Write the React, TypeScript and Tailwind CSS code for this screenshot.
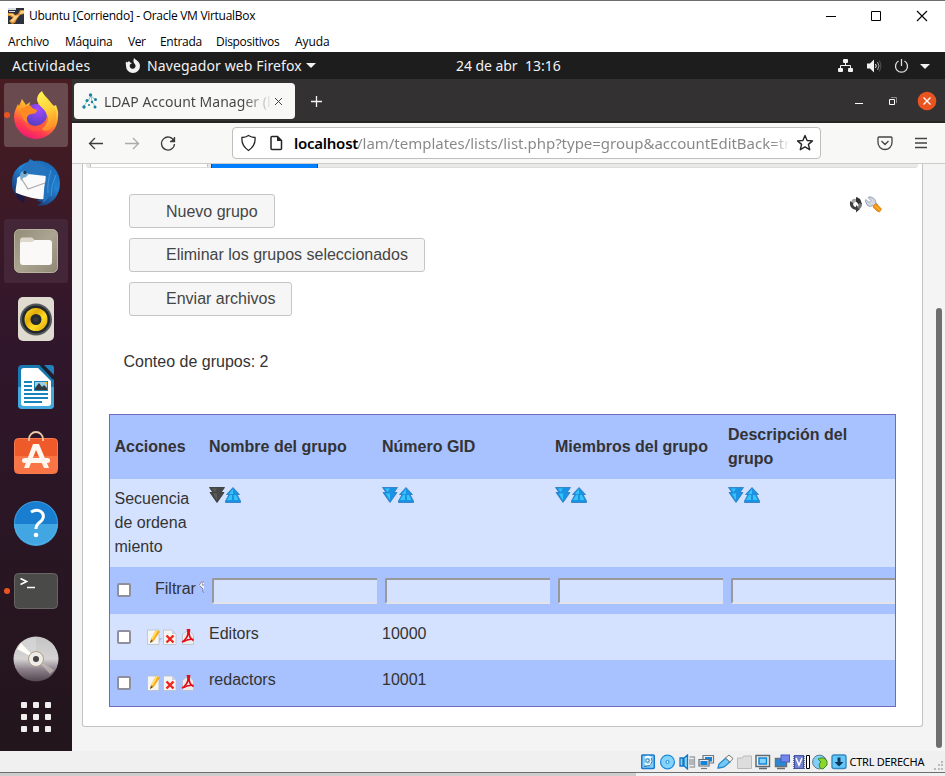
import type { ReactNode } from "react";

const UI = "font-['Open_Sans','Noto_Sans',sans-serif]";
const UBUNTU = "font-['Noto_Sans','Open_Sans',sans-serif]";

function TitleBar() {
  return (
    <header className={`h-[52px] shrink-0 border-t border-[#6e6e6e] bg-white text-[12px] text-black ${UI}`}>
      <div className="flex h-[29px] items-center pl-2">
        <svg width="16" height="16" viewBox="0 0 16 16" className="mr-[5px] shrink-0">
          <rect width="16" height="16" fill="#2c313d" />
          <path d="M0 0h8v2H0zM1 3h6v1H1z" fill="#d9dce2" />
          <path d="M0 5h5l2 2 3-1 2-4h4v4l-4 1-3 4-2 4-3 1-3-3 4-3-3-2H0z" fill="#dc8b28" />
          <path d="M1 6h4l2 2 4-1 2-4h3v2l-4 1-4 5-3 3-3-1 4-4-3-2H1z" fill="#ffd28b" />
        </svg>
        <span className="w-[227px] whitespace-nowrap tracking-[-0.29px]">Ubuntu [Corriendo] - Oracle VM VirtualBox</span>
        <div className="flex-1" />
        <svg width="106" height="12" viewBox="0 0 106 12" fill="none" stroke="#000" className="mr-[13px]">
          <path d="M0 6.5h10" />
          <path d="M45.5 1.5h9v9h-9z" />
          <path d="M91 1l10 10M101 1L91 11" strokeWidth="1.1" />
        </svg>
      </div>
      <nav className="flex h-[22px] items-center pl-2 pt-[2px] leading-[20px]">
        <span className="w-[57px] tracking-[-0.1px]">Archivo</span>
        <span className="w-[63px] tracking-[-0.25px]">Máquina</span>
        <span className="w-8 tracking-[-0.4px]">Ver</span>
        <span className="w-14 tracking-[-0.3px]">Entrada</span>
        <span className="w-[79px] tracking-[-0.3px]">Dispositivos</span>
        <span className="tracking-[-0.1px]">Ayuda</span>
      </nav>
    </header>
  );
}

function TopBar() {
  return (
    <div className={`flex h-[27px] shrink-0 items-center bg-[#1d1d1d] text-[14px] text-[#f2f2f2] ${UBUNTU}`}>
      <span className="ml-3 w-[112px] tracking-[0.35px]">Actividades</span>
      <svg width="18" height="16" viewBox="0 0 18 16" className="mr-[5px]">
        <path d="M2 3.5l1.2 1L5 3l1 1.5L8 5 6 6.5c-1 3 1.3 4.5 3 4.2 2.5-.4 3.3-3 1.8-4.8-1.2-1.2-2-2.5-.8-5.9 1 1.3 2 2 3 2.5 2 1.5 3 3.5 3 5.500a7 7 0 0 1-14 0c0-2-.5-2.500 0-4.500z" fill="#f2f2f2" />
      </svg>
      <span className="w-[155px] whitespace-nowrap tracking-[0.12px]">Navegador web Firefox</span>
      <svg width="10" height="5" className="ml-1"><path d="M0 0h10L5 5z" fill="#f2f2f2" /></svg>
      <span className="ml-[140px] w-[62px] whitespace-nowrap tracking-[-0.05px]">24 de abr</span>
      <span className="ml-[7px]">13:16</span>
      <div className="flex-1" />
      <svg width="92" height="14" viewBox="0 0 92 14" fill="#f2f2f2" className="mr-[15px]">
        <rect x="5" y="0" width="5" height="4" rx="1" />
        <rect x="0" y="9" width="5" height="4" rx="1" />
        <rect x="10" y="9" width="5" height="4" rx="1" />
        <path d="M7.500 4v3M2.500 9V6.500h10V9" fill="none" stroke="#f2f2f2" />
        <path d="M29 4.500h3l4-4v13l-4-4h-3z" />
        <path d="M37.500 5q1.500 2 0 4" fill="none" stroke="#f2f2f2" />
        <path d="M39.500 3q3 4 0 8" fill="none" stroke="#aaa" />
        <path d="M41.500 1.500q3 5.500 0 11" fill="none" stroke="#555" />
        <path d="M60.500 2a6 6 0 1 0 6 0M63.500 0v7" fill="none" stroke="#ddd" strokeWidth="1.300" />
        <path d="M82 5h10l-5 5z" />
      </svg>
    </div>
  );
}

function FirefoxIcon() {
  return (
    <svg width="46" height="48" viewBox="0 0 46 48">
      <defs>
        <linearGradient id="fx" x1=".8" y1="0" x2=".3" y2="1"><stop stopColor="#fff04a" /><stop offset=".45" stopColor="#ff9c27" /><stop offset=".75" stopColor="#ff3d4e" /><stop offset="1" stopColor="#f01679" /></linearGradient>
        <radialGradient id="fp" cx=".6" cy=".25" r=".8"><stop stopColor="#a34aff" /><stop offset="1" stopColor="#533dbd" /></radialGradient>
        <linearGradient id="fy" x1=".3" y1="0" x2=".6" y2="1"><stop stopColor="#fff44f" /><stop offset=".5" stopColor="#ffd03a" /><stop offset="1" stopColor="#ff8a26" /></linearGradient>
      </defs>
      <path d="M9 8l4 6 4-3-1 5 8-2 6-4 6 0 5 5 2-1 1 3c1 3 1.500 5 1 9A22 22 0 0 1 1 26c0-5 2-9 4-13l1 2z" fill="url(#fx)" />
      <circle cx="23" cy="24" r="11" fill="url(#fp)" />
      <path d="M24 9c0-4 2-7 5-9 2 5 6 7 9 12l3 6 1-1c3 9 0 18-6 22-3 1-6 1-7-1 5-5 7-12 3-18-3-4-7-6-8-11z" fill="url(#fy)" />
      <path d="M7 19c1-2 3-2 4-2 1-2 4-3 7-2 1 3 4 3 6 4 0 3-3 4-6 4-4 1-6 5-2 10-5-2-8-8-9-14z" fill="#ff8a22" />
      <path d="M11 30c7 9 21 5 24-6 1 11-7 17-15 16-4-1-8-5-9-10z" fill="#ff553f" opacity=".75" />
    </svg>
  );
}

function ThunderbirdIcon() {
  return (
    <svg width="50" height="50" viewBox="0 0 50 50">
      <defs><linearGradient id="tb" x1="1" y1="0" x2=".4" y2="1"><stop stopColor="#155ca8" /><stop offset=".5" stopColor="#2184d6" /><stop offset="1" stopColor="#182f69" /></linearGradient></defs>
      <path d="M19 1l4 2c14-2 26 8 26 22 0 12-7 19-14 22l-9 1 5-4-5-1 3-3-18-3 2 5C5 39 0 33 1 24 1 13 9 6 17 4z" fill="url(#tb)" />
      <path d="M10 12q3-6 10-8 10-1 16 7l-2 8-21 1z" fill="#2774be" />
      <path d="M6 20l3-2 8-2 18 2v4l-1 19C24 42 11 37 5 35c-1-4 1-8 1-15z" fill="#fafafa" />
      <path d="M10 20l7 11 17-6" fill="none" stroke="#aaa" strokeWidth="1.200" />
      <path d="M34 15c2 6-1 11-1 18l-1 12c5-2 6-9 10-10 2-12 3-21-6-26z" fill="#2272be" />
      <path d="M40 12q-4 13-3 23M45 17q-5 10-5 21" stroke="#3d9be2" fill="none" />
      <path d="M9 18q0-5 5-5l4 3q-2 3-6 4l-2 3z" fill="#7aaed0" /><circle cx="14" cy="14.500" r="1.700" fill="#173955" />
      <path d="M5 35l9 4-1 6c-4-2-8-5-8-10z" fill="#1d1945" />
    </svg>
  );
}

function FilesIcon() {
  return (
    <svg width="46" height="46" viewBox="0 0 46 46">
      <defs><linearGradient id="fl" x2="1" y2="1"><stop stopColor="#928c78" /><stop offset=".5" stopColor="#aaa491" /><stop offset="1" stopColor="#8e8875" /></linearGradient></defs>
      <rect x="1.500" y="1.500" width="43" height="43" rx="5" fill="url(#fl)" stroke="#b8b29f" />
      <path d="M7 12.500q0-3 3-3h9l3 3v5H7z" fill="#ddd8cb" />
      <path d="M7 16q0-2 2-2h10l3-2h14q3 0 3 3v19q0 3-3 3H10q-3 0-3-3z" fill="#faf9f7" />
    </svg>
  );
}

function RhythmboxIcon() {
  return (
    <svg width="38" height="46" viewBox="0 0 38 46">
      <defs><linearGradient id="rb" x2="1" y2="1"><stop stopColor="#ffe52e" /><stop offset=".35" stopColor="#e3aa07" /><stop offset=".6" stopColor="#ffdc25" /><stop offset="1" stopColor="#d7a106" /></linearGradient></defs>
      <rect x="1" y="1" width="36" height="44" rx="5" fill="#dfdbd0" />
      <circle cx="19" cy="23.500" r="16" fill="#55585a" /><circle cx="19" cy="23.500" r="14" fill="#20282d" />
      <circle cx="19" cy="23.500" r="11.500" fill="url(#rb)" /><circle cx="19" cy="23.500" r="5.500" fill="#222a30" /><circle cx="19" cy="23.500" r="2.500" fill="#35373a" />
    </svg>
  );
}

function WriterIcon() {
  return (
    <svg width="38" height="46" viewBox="0 0 38 46">
      <path d="M5 1h19l13 13v27q0 4-4 4H5q-4 0-4-4V5q0-4 4-4z" fill="#1979b1" />
      <path d="M1 23h36v18q0 4-4 4H5q-4 0-4-4z" fill="#43a9dd" />
      <path d="M27 1h7q3 0 3 3v7z" fill="#2382bc" /><path d="M23 0l14 15" stroke="#14252f" strokeWidth="2.500" />
      <path d="M4 7q0-3 3-3h14l13 13v22q0 3-3 3H7q-3 0-3-3z" fill="#fff" />
      <path d="M7 17h8v2H7zM7 21h8v2H7zM7 25h8v2H7zM7 29h24v2H7zM7 33h24v2H7zM7 37h18v2H7zM17 17h14v10H17z" fill="#1685bb" />
      <path d="M18 18h12v8H18z" fill="#9dcdec" /><path d="M18 26v-2l4-5 3 4 2-2 3 3v2z" fill="#333b3d" /><path d="M27 18h3v3z" fill="#efc12a" />
    </svg>
  );
}

function SoftwareIcon() {
  return (
    <svg width="46" height="46" viewBox="0 0 46 46" className="mb-[5px]">
      <rect x="1.500" y="8.500" width="43" height="35" rx="4" fill="#ee5a29" stroke="#f57c51" />
      <path d="M2 26h42v14q0 3-3 3H5q-3 0-3-3z" fill="#fa7445" />
      <path d="M16 11V9a7 7 0 0 1 14 0v2" fill="none" stroke="#edcba9" strokeWidth="1.800" />
      <path d="M20 14h6l10 24h-5l-8-18-7 18h-5z" fill="#fff6ef" />
      <rect x="9" y="28" width="28" height="5" rx="2.500" fill="#fff6ef" />
    </svg>
  );
}

function HelpIcon() {
  return (
    <svg width="46" height="46" viewBox="0 0 46 46">
      <circle cx="23" cy="23" r="22" fill="#197ed0" /><path d="M1 24h44a22 22 0 0 1-44 0z" fill="#42a6e3" />
      <circle cx="23" cy="23" r="21.500" fill="none" stroke="#63bce9" opacity=".5" />
      <path d="M18 12q5-3 9-1c5 3 4 8 0 11q-4 3-4 7" fill="none" stroke="white" strokeWidth="3" /><circle cx="23" cy="35" r="2.300" fill="white" />
    </svg>
  );
}

function TerminalIcon() {
  return (
    <svg width="46" height="38" viewBox="0 0 46 38">
      <rect x="1.500" y="1.500" width="43" height="35" rx="4" fill="#4a4a49" stroke="#686665" />
      <path d="M7.500 6.500l6 3-6 3" fill="none" stroke="white" strokeWidth="1.700" /><path d="M14 15.500h8" stroke="white" strokeWidth="1.500" />
    </svg>
  );
}

function DiscIcon() {
  return (
    <svg width="46" height="46" viewBox="0 0 46 46">
      <defs><linearGradient id="disc" x2="0" y2="1"><stop stopColor="#c5c5c5" /><stop offset=".5" stopColor="#d5d3d4" /><stop offset=".72" stopColor="#8f848e" /><stop offset="1" stopColor="#514550" /></linearGradient></defs>
      <circle cx="23" cy="23" r="22.500" fill="url(#disc)" />
      <path d="M23 23L23 1q-10 1-15 6z" fill="#ddd" opacity=".5" /><path d="M23 23L4 13l4-6z" fill="#fffdf6" /><path d="M23 23l18 11-4 4z" fill="#d1c5be" opacity=".6" />
      <circle cx="23" cy="23" r="7.500" fill="#eeece8" stroke="#aa9e83" /><circle cx="23" cy="23" r="3" fill="#474443" />
    </svg>
  );
}

function DockItem({ children, tone = "", dot = false }: { children: ReactNode; tone?: string; dot?: boolean }) {
  return (
    <div className={`relative mx-1 mb-1 flex h-16 w-16 shrink-0 items-center justify-center rounded-[3px] ${tone}`}>
      {dot && <i className="absolute left-0 top-[29px] size-[6px] rounded-full bg-[#e95420]" />}
      {children}
    </div>
  );
}

function Dock() {
  return (
    <aside className="flex w-[72px] shrink-0 flex-col bg-linear-to-b from-[#481c20] via-[#30162b] via-40% to-[#22151b] pt-1">
      <DockItem dot tone="bg-[#684a4f]"><FirefoxIcon /></DockItem>
      <DockItem><ThunderbirdIcon /></DockItem>
      <DockItem tone="bg-[#432739]"><FilesIcon /></DockItem>
      <DockItem><RhythmboxIcon /></DockItem>
      <DockItem><WriterIcon /></DockItem>
      <DockItem><SoftwareIcon /></DockItem>
      <DockItem><HelpIcon /></DockItem>
      <DockItem dot><TerminalIcon /></DockItem>
      <DockItem><DiscIcon /></DockItem>
      <div className="ml-[21px] mt-[7px] grid grid-cols-3 gap-[6px] self-start">
        {Array.from({ length: 9 }, (_, i) => <i key={i} className="size-[6px] rounded-[1px] bg-[#f1efed]" />)}
      </div>
    </aside>
  );
}

function TabBar() {
  return (
    <div className="flex h-11 shrink-0 items-start border-b-2 border-[#262526] bg-[#333132] pt-1">
      <div className={`ml-[2px] flex h-9 w-[221px] items-center rounded-[4px] bg-[#f8f8f7] text-[14px] ${UBUNTU}`}>
        <svg width="16" height="17" viewBox="0 0 16 17" className="ml-2 shrink-0">
          <path d="M9 2.500L6 8M9 2.500l5 5.500M5.500 8L1 14M9 3l1 6 4 5" stroke="#8fc3cb" fill="none" />
          <g fill="#16849c"><circle cx="8.500" cy="2" r="1.700" /><circle cx="5" cy="7.500" r="1.500" /><circle cx="13.500" cy="6.500" r="1.500" /><circle cx="10" cy="9" r="1.200" /><circle cx="2" cy="14" r="1.700" /><circle cx="7" cy="12" r="1" /><circle cx="13" cy="14" r="1.500" /></g>
        </svg>
        <span className="ml-[6px] w-[169px] whitespace-nowrap bg-linear-to-r from-[#444] from-82% to-transparent bg-clip-text tracking-[0.03px] text-transparent">LDAP Account Manager (l</span>
        <svg width="9" height="9" viewBox="0 0 9 9" className="ml-[1px] shrink-0"><path d="M1 1l7 7M8 1L1 8" stroke="#444" /></svg>
      </div>
      <svg width="12" height="12" className="ml-[16px] mt-[13px]"><path d="M5.500 0v11M0 5.500h11" stroke="#f4f4f4" strokeWidth="1.300" /></svg>
      <div className="flex-1" />
      <svg width="82" height="20" viewBox="0 0 82 20" className="mr-2 mt-2">
        <path d="M0 12.500h8" stroke="white" /><path d="M34.500 8.500h5v5h-5z" fill="none" stroke="white" /><path d="M36 6.500h5.500V12" fill="none" stroke="#888" />
        <circle cx="72" cy="10" r="9.300" fill="#e95420" /><path d="M68.500 6.500l7 7M75.500 6.500l-7 7" stroke="white" strokeWidth="1.400" />
      </svg>
    </div>
  );
}

function Toolbar() {
  return (
    <div className="flex h-[41px] shrink-0 items-center border-b border-[#ccc] bg-[#f8f8f7]">
      <svg width="90" height="18" viewBox="0 0 90 18" fill="none" stroke="#3c3c3c" strokeWidth="1.300" className="ml-4 shrink-0">
        <path d="M15 9.500H1.500M7 4L1.500 9.500 7 15" /><path d="M37 9.500h13.500M45 4l5.500 5.500L45 15" stroke="#aaa" />
        <path d="M86 7a6.500 6.500 0 1 0 .5 3M86.500 3v4.500H82" /><path d="M87 3v5h-5z" fill="#3c3c3c" stroke="none" />
      </svg>
      <div className={`ml-[54px] flex h-8 w-[589px] shrink-0 items-center rounded-[4px] border border-[#bebebe] bg-white text-[15px] ${UBUNTU}`}>
        <svg width="44" height="18" viewBox="0 0 44 18" fill="none" stroke="#242424" strokeWidth="1.500" className="ml-2 shrink-0">
          <path d="M7 1q3 2 6.500 2 1 8-6.500 13Q-.5 11 .5 3 4 3 7 1z" strokeWidth="1.300" transform="translate(.5 .5)" />
          <path d="M31 2.500h5.500l4 4v8q0 1-1 1H31q-1 0-1-1v-11q0-1 1-1z" /><path d="M36 2v5h5z" fill="#242424" stroke="none" />
        </svg>
        <div className="ml-[9px] flex w-[499px] whitespace-nowrap">
          <b className="w-[63px] shrink-0 font-semibold tracking-[-0.25px] text-black">localhost</b>
          <span className="bg-linear-to-r from-[#868686] from-96% to-transparent bg-clip-text tracking-[-0.02px] text-transparent">/lam/templates/lists/list.php?type=group&amp;accountEditBack=tr</span>
        </div>
        <svg width="18" height="18" viewBox="0 0 18 18" fill="none" stroke="#242424" strokeWidth="1.400" strokeLinejoin="round" className="ml-[3px] shrink-0"><path d="M9 1.500l2.100 5 5.400.4-4.100 3.500 1.300 5.300L9 12.900l-4.700 2.800 1.300-5.300-4.100-3.500 5.400-.4z" /></svg>
      </div>
      <svg width="52" height="16" viewBox="0 0 52 16" fill="none" stroke="#444" strokeWidth="1.300" className="ml-[56px]">
        <path d="M2 2h12q1 0 1 1v4.500a7 7 0 0 1-14 0V3q0-1 1-1zM4.500 6L8 9.500 11.500 6" /><path d="M38 3.500h12M38 8h12M38 12.500h12" />
      </svg>
    </div>
  );
}

function PageButton({ width, drop = "", children }: { width: string; drop?: string; children: ReactNode }) {
  return <button className={`flex h-[34px] items-center rounded-[3px] border border-[#c5c5c5] bg-[#f6f6f6] pl-9 text-[#454545] ${width} ${drop}`}>{children}</button>;
}

function SortArrows({ active = false }: { active?: boolean }) {
  const base = active ? "#484848" : "#1a93e4";
  const edge = active ? "#303030" : "#2a78bd";
  const shine = active ? "#5c5c5c" : "#35c3fa";
  return (
    <svg width="32" height="16" viewBox="0 0 32 16" className="mt-[3px]">
      <path d="M.5.500h15L12 5.500h3L8 15.500 1 5.500h3z" fill={base} stroke={edge} strokeWidth=".8" />
      <path d="M3 1.500h5L5.500 5zM4 6.500h4v7z" fill={shine} />
      <path d="M24 .500l6.500 7H28l3.500 6.500v1.500h-15V14L20 7.500h-2.500z" fill="#1a93e4" stroke="#2a78bd" strokeWidth=".8" />
      <path d="M24 2v5h-4zM23 8v5h-5l3-5zM25 8h2l2.500 5H25z" fill="#35c3fa" />
    </svg>
  );
}

function Check() {
  return <span className="block size-[14px] shrink-0 rounded-[2px] border-2 border-[#8f8f9d] bg-white" />;
}

function RowTools() {
  return (
    <svg width="48" height="17" viewBox="0 0 48 17">
      <g stroke="#b8bfc9" strokeWidth=".8"><path d="M.5 1h11.500v14.500H.5z" fill="#f5f5f3" /><path d="M16.500 1h8.500l4 4v10.500H16.500z" fill="#f5f5f3" /><path d="M35.500 5v10.500h11V6L42 1z" fill="#ececec" /></g>
      <path d="M12 9h3.500L12 13z" fill="#acc3e8" /><path d="M3 14l1-4 5-9 4 1.500-6 9z" fill="#f8a91c" /><path d="M3 14l1-3 2 1z" fill="#4b4540" /><path d="M5 10l5-8.500" stroke="#ffe56b" strokeWidth="1.500" />
      <path d="M25 1l4 4h-4z" fill="#c9d3dd" /><path d="M19.500 6.500l7 7M26.500 6.500l-7 7" stroke="#f1231d" strokeWidth="2.400" />
      <path d="M35 13c5-3 7-7 5.500-12.500h2c-1 5 0 9 4 11" fill="none" stroke="#e60c17" strokeWidth="1.600" /><path d="M36 13q5-3.500 10.500-2.500" fill="none" stroke="#e60c17" strokeWidth="1.500" />
    </svg>
  );
}

const columns = ["Nombre del grupo", "Número GID", "Miembros del grupo", "Descripción del grupo"];
const grid = "grid grid-cols-[94px_173px_173px_173px_172px]";

function GroupsTable() {
  return (
    <div className="h-[293px] w-[787px] border border-[#7467bd] bg-[#a8c1ff] leading-6">
      <div className={`${grid} h-16 items-center font-bold`}>
        <span className="pl-[4.5px]">Acciones</span>
        {columns.map((c) => <span key={c} className="pl-[5px]">{c}</span>)}
      </div>
      <div className={`${grid} h-[88px] items-start bg-[#d5e2ff] pt-[5px]`}>
        <div className="pl-[4.5px] pt-[3px]">Secuencia<br />de ordena<br />miento</div>
        {columns.map((c, i) => <div key={c} className="pl-[5px]"><SortArrows active={i === 0} /></div>)}
      </div>
      <div className={`${grid} h-[47px]`}>
        <div className="flex overflow-hidden pl-[7px] pt-[10px]">
          <span className="mt-[6px]"><Check /></span>
          <span className="ml-[24px]">Filtrar</span>
          <svg width="6" height="13" viewBox="0 0 6 13" className="ml-[3px] mt-[4px] shrink-0"><path d="M.5 3Q2 0 6 .5V12L4 11V7L1 5z" fill="#f3f1f3" /><path d="M.5 4Q1 .5 6 1M1 5l3 3v3l2 1M3 3h1v2" stroke="#77738a" fill="none" strokeWidth=".9" /></svg>
        </div>
        {columns.map((c) => (
          <div key={c} className="overflow-hidden pl-2 pt-[11px]">
            <input aria-label={c} className="block h-[26px] w-[180px] rounded-[2px] border-2 border-b-[#e4e4e8] border-l-[#999] border-r-[#e4e4e8] border-t-[#999] bg-[#d5e2ff]" />
          </div>
        ))}
      </div>
      {[["Editors", "10000"], ["redactors", "10001"]].map(([name, gid], i) => (
        <div key={name} className={`${grid} h-[46px] ${i === 0 ? "bg-[#d5e2ff]" : "bg-[#a8c1ff]"}`}>
          <div className="flex pl-[7px] pt-[15px]"><span className="mt-px"><Check /></span><span className="ml-[16px]"><RowTools /></span></div>
          <span className="pl-[5px] pt-[8px]">{name}</span><span className="pl-[5px] pt-[8px]">{gid}</span>
        </div>
      ))}
    </div>
  );
}

function Page() {
  return (
    <main className="flex h-[587px] bg-[#f4f4f4] pl-[10px] font-['Liberation_Sans',Arial,sans-serif] text-[16px] text-[#333]">
      <section className="h-[563px] w-[841px] rounded-b-[3px] border border-t-0 border-[#c3c3c3] bg-white">
        <div className="ml-[3px] flex h-1 w-[832px] rounded-b-[3px] border-b border-[#ddd] bg-[#e9e9e9]">
          <div className="ml-1 h-[3px] w-[118px] border-x border-[#c5c5c5] bg-white" />
          <div className="ml-[3px] h-1 w-[107px] border-x border-[#003eff] bg-[#007fff]" />
        </div>
        <div className="ml-[46px] mt-[26px] flex justify-between">
          <div className="flex flex-col gap-[10px]">
            <PageButton width="w-[146px]" drop="pt-[2px]">Nuevo grupo</PageButton>
            <PageButton width="w-[296px]">Eliminar los grupos seleccionados</PageButton>
            <PageButton width="w-[163px]">Enviar archivos</PageButton>
          </div>
          <svg width="34" height="18" viewBox="0 0 34 18" className="mr-[39px] mt-[2px]">
            <path d="M8 .5V3q-4-1-5 1L2 6l3 2q0-3 3-2v2l4-3.500z" fill="#a8a8a8" /><path d="M7 1l4 2 2 5-3 2Q9 6 7 6z" fill="#303030" />
            <path d="M1 5l3 2q0 4 3 4V9l4 4-4 3.500V14Q0 13 1 5z" fill="#3d3d3d" /><path d="M13 8q0 4-3 5l-2-2q2-1 2-4z" fill="#777" />
            <path d="M21 .8l-2 .7 3 3-2 2-3-3-.5 2 2 4q3 2 5 0l3 2 2-3-2-2.500q0-4-5.500-5.200z" fill="#d2d7e2" stroke="#9299aa" strokeWidth=".9" />
            <path d="M25 9l2-1.500 5.500 5.500-2 3-2.500-1-4-4z" fill="#f5950e" stroke="#d57a14" strokeWidth=".8" /><path d="M26 9.500l5 5" stroke="#ffc750" />
          </svg>
        </div>
        <p className="ml-[40.5px] mt-[34px] leading-6">Conteo de grupos: 2</p>
        <div className="ml-[26px] mt-[40px]"><GroupsTable /></div>
      </section>
      <div className="ml-[13px] mt-[144px] h-[440px] w-[6px] rounded-full bg-[#6e6e6e]" />
    </main>
  );
}

function StatusIcons() {
  return (
    <svg width="207" height="16" viewBox="0 0 207 16" className="shrink-0">
      <rect x=".7" y="1" width="12.600" height="13.500" rx="1" fill="#7fcdf9" stroke="#1b78ca" strokeWidth="1.500" />
      <path d="M4 4q3-2.500 6 0 1 4-1 6-3 2-5-1" fill="none" stroke="#fff" strokeWidth="1.800" /><circle cx="6.500" cy="6.500" r="1.500" fill="#fff" stroke="#2f679a" strokeWidth=".8" /><path d="M3 12.500l6-1M10.500 4q1.500 4-1 6.500" stroke="#27649a" fill="none" strokeWidth=".9" />
      <circle cx="26.500" cy="8" r="6.900" fill="#83d4fb" stroke="#248bdc" strokeWidth="1.300" /><circle cx="26.500" cy="8" r="1.500" fill="#fff" stroke="#2180c8" />
      <path d="M39 4h3v8h-3zM43 4l3.500-3v14L43 12z" fill="#83d4fb" stroke="#1676c4" strokeWidth="1.300" />
      <path d="M48.500 3h5v10h-5M48 6h5M48 8h5M48 10h5" fill="none" stroke="#a0a4a8" strokeWidth="1.300" />
      <g strokeWidth="1.200"><path d="M62 1.500h10.500V9H62z" fill="#eee" stroke="#737b82" /><path d="M64 3h7v4.500h-7z" fill="#1583d8" /><path d="M58 5.500h10V12H58z" fill="#eee" stroke="#626c75" /><path d="M59.500 7h7v4h-7z" fill="#1583d8" /><path d="M60 14.500h6" stroke="#777" /></g>
      <path d="M77 14l1-4 7-6 4 4-6 5-5 1z" fill="#75c9f4" stroke="#2989cd" strokeWidth="1.300" /><path d="M84.500 4L88 1l4 3.500L89 8z" fill="#f6f6f6" stroke="#777" />
      <path d="M96.500 4h5l1-2h8v12.500h-14z" fill="#ddd" stroke="#bbb" />
      <path d="M115 1.500h13.500v11H115zM118 14.500h8" fill="#f5f5f5" stroke="#606970" strokeWidth="1.500" /><rect x="118" y="4" width="7.500" height="6" fill="#83d4fb" stroke="#1684d4" strokeWidth="1.500" />
      <path d="M134.500 4.500h11v8h-11zM136 14.500h8" fill="#258bd9" stroke="#686f75" strokeWidth="1.500" /><rect x="140" y="1" width="8.500" height="7" fill="#7287ee" stroke="#485bbd" />
      <rect x="153.500" y="1.500" width="9" height="13" fill="#7180ce" stroke="#4556a7" /><path d="M153 2v13M163 2v13" stroke="#384696" strokeDasharray="1 1" strokeWidth="1.500" /><path d="M155 4l3 7 3-7" fill="none" stroke="#fff" strokeWidth="1.500" />
      <path d="M165.500 1.500h3v13h-3z" fill="#fff" stroke="#000" />
      <circle cx="178.500" cy="8" r="6.900" fill="#7ed0f8" stroke="#62798a" /><path d="M180 4l-3 1 3 3-2 2 1 4 3 1 4-4V7l-3-3z" fill="#8ed42b" stroke="#348c28" />
      <rect x="191" y="1" width="14" height="13.500" rx="2" fill="#64c9fa" stroke="#3488bf" strokeWidth="1.400" />
      <path d="M196.500 3.500h3V8h3l-4.500 4.500L193.500 8h3z" fill="#12395e" />
    </svg>
  );
}

function StatusBar() {
  return (
    <footer className="h-[25px] shrink-0 bg-[#f0f0f0]">
      <div className="flex h-[21px] items-center">
        <span className="ml-[641px] flex"><StatusIcons /></span>
        <span className="ml-[1.5px] w-[76px] whitespace-nowrap pt-[2px] font-['Noto_Sans','Open_Sans',sans-serif] text-[11px] tracking-[-0.26px] text-black">CTRL DERECHA</span>
        <svg width="9" height="9" className="ml-auto mr-[2px] mt-[7px] shrink-0"><path d="M7 0h2v2H7zM4 3h2v2H4zM7 3h2v2H7zM0 7h2v2H0zM4 7h2v2H4zM7 7h2v2H7z" fill="#bbb" /></svg>
      </div>
      <div className="h-px bg-[#6e6e6e]" />
      <div className="h-[3px] w-[636px] bg-[#ccc]" />
    </footer>
  );
}

export default function App() {
  return (
    <div className="flex h-[776px] w-[945px] flex-col overflow-hidden bg-white">
      <TitleBar />
      <TopBar />
      <div className="flex h-[672px] shrink-0">
        <Dock />
        <div className="flex w-[873px] flex-col">
          <TabBar />
          <Toolbar />
          <Page />
        </div>
      </div>
      <StatusBar />
    </div>
  );
}
